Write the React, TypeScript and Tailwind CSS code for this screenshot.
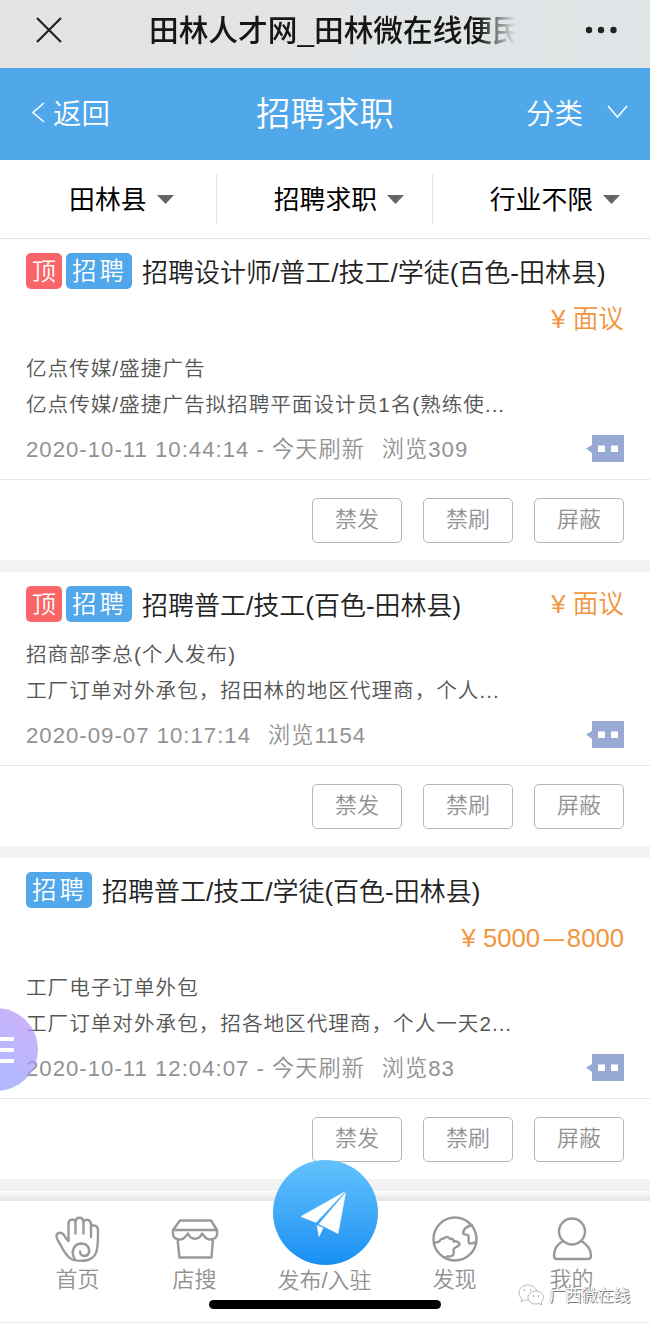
import type { ReactNode } from "react";

type Job = {
    title: string;
    pinned?: boolean;
    price: string[];
    priceBelow?: boolean;
    company: string;
    desc: string;
    time: string;
    refreshed?: boolean;
    views: number;
};

const jobs: Job[] = [
    {
        title: "招聘设计师/普工/技工/学徒(百色-田林县)",
        pinned: true,
        price: ["面议"],
        priceBelow: true,
        company: "亿点传媒/盛捷广告",
        desc: "亿点传媒/盛捷广告拟招聘平面设计员1名(熟练使...",
        time: "2020-10-11 10:44:14",
        refreshed: true,
        views: 309
    },
    {
        title: "招聘普工/技工(百色-田林县)",
        pinned: true,
        price: ["面议"],
        company: "招商部李总(个人发布)",
        desc: "工厂订单对外承包，招田林的地区代理商，个人...",
        time: "2020-09-07 10:17:14",
        views: 1154
    },
    {
        title: "招聘普工/技工/学徒(百色-田林县)",
        price: ["5000", "8000"],
        priceBelow: true,
        company: "工厂电子订单外包",
        desc: "工厂订单对外承包，招各地区代理商，个人一天2...",
        time: "2020-10-11 12:04:07",
        refreshed: true,
        views: 83
    }
];

const filters = ["田林县", "招聘求职", "行业不限"];
const actions = ["禁发", "禁刷", "屏蔽"];

function TitleBar() {
    return (
        <div className="flex h-[68px] items-center bg-linear-to-r from-[#e3e3e3] via-[#e2e4e6] to-[#dfe5e6] pr-[33px] pl-[36px]">
            <svg width="26" height="26" viewBox="0 0 26 26" fill="none" stroke="#222" strokeWidth="2.2" className="-mt-2">
                <path d="M1 1L25 25M25 1L1 25" />
            </svg>
            <div className="-mt-[6px] ml-[87px] w-[374px] mask-r-from-88% mask-r-to-98% text-[29.7px] font-medium whitespace-nowrap text-[#161616]">
                田林人才网_田林微在线便民
            </div>
            <svg width="32" height="8" viewBox="0 0 32 8" fill="#222" className="-mt-2 ml-auto">
                <circle cx="4" cy="4" r="3.2" />
                <circle cx="16" cy="4" r="3.2" />
                <circle cx="28.5" cy="4" r="3.2" />
            </svg>
        </div>
    );
}

function NavBar() {
    return (
        <div className="flex h-[92px] items-center justify-between bg-[#50a7ea] px-[22px] text-white">
            <div className="flex items-center pl-[10px]">
                <svg width="13" height="21" viewBox="0 0 13 21" fill="none" stroke="currentColor" strokeWidth="1.6" className="-mt-[3px]">
                    <path d="M12 1L1 10.5L12 20" />
                </svg>
                <span className="mt-px ml-[8px] text-[28.5px] font-[350]">返回</span>
            </div>
            <h1 className="mt-[2px] ml-[14px] text-[34.5px] font-[350]">招聘求职</h1>
            <div className="flex items-center">
                <span className="mt-px text-[28.5px] font-[350]">分类</span>
                <svg width="21" height="13" viewBox="0 0 21 13" fill="none" stroke="currentColor" strokeWidth="1.6" className="-mt-[5px] ml-[24px]">
                    <path d="M1 1L10.5 12L20 1" />
                </svg>
            </div>
        </div>
    );
}

function FilterBar() {
    return (
        <div className="flex h-[79px] items-center border-b border-[#e2e2e2] bg-white">
            {filters.map(label => (
                <div
                    key={label}
                    className="flex h-[50px] w-[216.5px] items-center justify-end border-r border-[#e5e5e5] pr-[42px] text-[25.8px] text-black last:w-[217px] last:border-0 last:pr-[30px] nth-[2]:pr-[28px]"
                >
                    <span className="mt-[2px]">{label}</span>
                    <svg width="17" height="9" viewBox="0 0 17 9" fill="#666" className="ml-[10px]">
                        <path d="M0 0H17L8.5 9Z" />
                    </svg>
                </div>
            ))}
        </div>
    );
}

function Price({ value }: { value: string[] }) {
    const [from, to] = value;

    return (
        <span className="text-[25.7px] font-[350] text-[#f0963f]">
            ¥&nbsp;{from}
            {to && (
                <>
                    <span className="mx-[.5px] inline-block scale-x-80">—</span>
                    {to}
                </>
            )}
        </span>
    );
}

function JobCard({ job }: { job: Job }) {
    return (
        <div className="mb-3 bg-white">
            <div className="px-[26px] pt-[14px]">
                <div className="flex h-[36px] items-center">
                    {job.pinned && (
                        <span className="mr-1 flex h-9 w-9 items-center justify-center rounded-[5px] bg-[#fa6667] pt-px text-[24px] font-[350] text-white">顶</span>
                    )}
                    <span className="flex h-9 w-[66px] items-center rounded-[5px] bg-[#50a7ea] pt-[2px] pl-[6px] text-[24.5px] font-[350] tracking-[3px] text-white">招聘</span>
                    <span className="mt-[4px] ml-[10px] flex-1 text-[26px] font-[350] whitespace-nowrap text-[#222]">{job.title}</span>
                    {!job.priceBelow && <Price value={job.price} />}
                </div>
                {job.priceBelow && (
                    <div className="flex h-[47px] items-center justify-end pt-[13px]">
                        <Price value={job.price} />
                    </div>
                )}
                <div className="mt-[15px] text-[20.6px] leading-[36px] font-[350] tracking-[1px] whitespace-nowrap text-[#555]">
                    <p>{job.company}</p>
                    <p>{job.desc}</p>
                </div>
                <div className="flex h-[56px] items-center justify-between pb-[3px] text-[22.2px] font-[350] tracking-[1px] text-[#929292]">
                    <p className="mt-px">
                        <span>{job.time}{job.refreshed && " - 今天刷新"}</span>
                        <span className="ml-[17px]">浏览{job.views}</span>
                    </p>
                    <svg width="38" height="27" viewBox="0 0 38 27" className="-mt-[3px]">
                        <path d="M6 0H38V27H6V18L0 13.5L6 10Z" fill="#98aad3" />
                        <path d="M12 10.500H19V17H12ZM25 10.500H32V17H25Z" fill="#fff" />
                    </svg>
                </div>
            </div>
            <div className="flex h-[81px] items-center justify-end gap-[21px] border-t border-[#e5e5e5] px-[26px]">
                {actions.map(label => (
                    <button key={label} className="h-[45px] w-[90px] rounded-[5px] border-[1.5px] border-[#b5b5b5] pb-[2px] text-[22px] font-[350] text-[#929292]">
                        {label}
                    </button>
                ))}
            </div>
        </div>
    );
}

function Tab({ label, children }: { label: string; children: ReactNode }) {
    return (
        <div className="flex flex-col items-center pt-[14px]">
            <svg width="48" height="48" viewBox="0 0 48 48" fill="none" stroke="#999" strokeWidth="2.4" strokeLinecap="round" strokeLinejoin="round">
                {children}
            </svg>
            <span className="text-[22px] leading-[33px] font-[350] text-[#929292]">{label}</span>
        </div>
    );
}

function TabBar() {
    return (
        <div className="absolute inset-x-0 bottom-0">
            <div className="h-[10px] bg-linear-to-b from-white to-[#e4e4e4]" />
            <div className="relative grid h-[122px] grid-cols-[117px_117px_143px_117px_117px] border-b border-[#e8e8e8] bg-white pl-[19px]">
                <Tab label="首页">
                    <path d="M14.500 26V8.500C14.500 4 20 3.500 21.500 6.500C22 1.500 28.500 1.500 29.500 6C32.500 3.500 37 5 37 9V11.500C40 9 44 11 44 15C44 20 44 26 43.500 31C43 38 41 43 34 45C29 46 22 46 18 44.500C13 42 9 35 6 29C4 25.500 2 23.500 2.500 20.500C3.500 17 8 17 10 20C11.500 22.500 12.500 25 14.500 26" />
                    <path d="M21.500 7V18.500M29.500 7V18.500M37 11V22" />
                    <path d="M21 44.500C16.500 38 19 29 27 28.500C33 28.500 36 33 35 37.500C33.500 42 26.500 42.500 26 36.500" />
                </Tab>
                <Tab label="店搜">
                    <path d="M9 5.500H40L46 15V19C46 25 37 26 34 22L31 18.500C28 25.500 20 25.500 17 18.500L14 22C11 26 2 25 2 19V15ZM2 15H46M6.500 24L8.500 42.500H40.500L42 24" />
                </Tab>
                <div className="flex justify-center pt-[62px]">
                    <span className="text-[22px] leading-[35px] font-[350] text-[#929292]">发布/入驻</span>
                </div>
                <Tab label="发现">
                    <circle cx="24" cy="24" r="21.500" />
                    <path d="M3 27.500C6 27.500 8 27.500 9 25.500C9.500 23 13 24.500 14 22.500C16 21.500 18 22 19 24C22 23 22.500 25 22.500 26.500C25 26 28 26.500 28.500 29C28.500 32 23 31.500 22.500 34.500C23.500 40 22 42 16 41.500L13.500 42.500M41 10C36 11 31 15 32.500 19C34 20.500 37 18.500 37.500 21C38 25.500 36.500 28 39 28.500C42 29 43 27 45 27" />
                </Tab>
                <Tab label="我的">
                    <circle cx="24" cy="16.500" r="13" />
                    <path d="M15 26C9 29.500 6 35 6 40.500C6 43 7 44 9 44H40C42 44 43 43 43 40.500C43 35 39 29.500 33.500 26" />
                </Tab>
                <div className="absolute -top-[41px] left-[273px] size-[105px] rounded-full bg-linear-to-b from-[#62c2fc] to-[#1490f4] pt-[31px] pl-[27px]">
                    <svg width="46" height="46" viewBox="0 0 46 46" fill="#fff" stroke="#fff" strokeWidth=".6" strokeLinejoin="round">
                        <path d="M44.500 1L1 25.500L16 31.500ZM45.500 2L19 33L38 42.500ZM17 34.500L23 37L19 45.500Z" />
                    </svg>
                </div>
                <div className="absolute bottom-[13px] left-[209px] h-[9px] w-[232px] rounded-full bg-black" />
                <Watermark />
            </div>
        </div>
    );
}

function Watermark() {
    return (
        <div className="absolute right-[20px] bottom-[16px] flex items-center">
            <svg width="27" height="22" viewBox="0 0 27 22" fill="#fff" stroke="#bbb" strokeWidth="1">
                <path d="M4 15C-1 11 0 2 9 1c6 0 10 3 10 8M4 15l-1 3 4-2h4" />
                <path d="M18 7c-5 0-8 3-8 6.500s3 6.500 8 6.500l3-.5 3 1.500-1-3c5-4 2-11-5-11Z" />
                <path d="M6 6h1M12 6h1M15 12h1M20 12h1" stroke="#999" strokeWidth="1.5" />
            </svg>
            <span className="ml-[4px] text-[16.2px] leading-[22px] text-white [text-shadow:1px_1px_0_#777,-0.5px_-0.5px_0_#aaa]">广西微在线</span>
        </div>
    );
}

function FloatingMenu() {
    return (
        <div className="absolute top-[1008px] -left-[45px] flex size-[83px] flex-col justify-center gap-[7px] rounded-full bg-linear-to-tr from-[#86a4ff]/75 via-[#9f9fff]/75 to-[#c698f6]/75 pl-[45px]">
            <i className="h-[4px] w-[14px] bg-white" />
            <i className="h-[4px] w-[14px] bg-white" />
            <i className="h-[4px] w-[14px] bg-white" />
        </div>
    );
}

export default function App() {
    return (
        <div className="relative h-[1323px] w-[650px] overflow-hidden bg-[#f2f2f2] font-['Liberation_Sans','Noto_Sans_CJK_SC',sans-serif]">
            <TitleBar />
            <NavBar />
            <FilterBar />
            {jobs.map(job => (
                <JobCard key={job.title} job={job} />
            ))}
            <FloatingMenu />
            <TabBar />
        </div>
    );
}
